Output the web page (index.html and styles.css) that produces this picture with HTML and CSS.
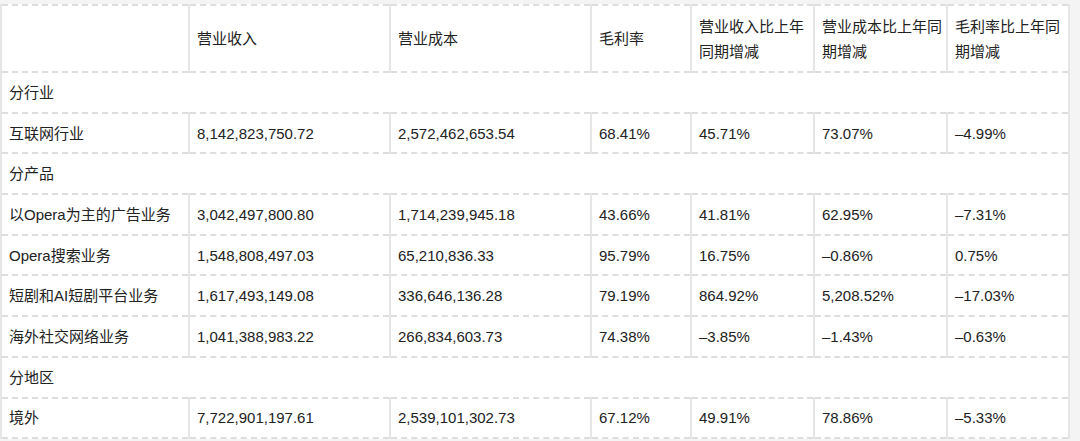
FILE: index.html
```html
<!DOCTYPE html>
<html lang="zh-CN">
<head>
<meta charset="utf-8">
<title>营业收入</title>
<link rel="stylesheet" href="styles.css">
</head>
<body>
<table class="fin">
  <colgroup>
    <col class="c1"><col class="c2"><col class="c3"><col class="c4"><col class="c5"><col class="c6"><col class="c7">
  </colgroup>
  <thead>
    <tr class="head">
      <th></th>
      <th>营业收入</th>
      <th>营业成本</th>
      <th>毛利率</th>
      <th>营业收入比上年同期增减</th>
      <th>营业成本比上年同期增减</th>
      <th>毛利率比上年同期增减</th>
    </tr>
  </thead>
  <tbody>
    <tr class="group"><td colspan="7">分行业</td></tr>
    <tr><td>互联网行业</td><td>8,142,823,750.72</td><td>2,572,462,653.54</td><td>68.41%</td><td>45.71%</td><td>73.07%</td><td>–4.99%</td></tr>
    <tr class="group"><td colspan="7">分产品</td></tr>
    <tr><td>以Opera为主的广告业务</td><td>3,042,497,800.80</td><td>1,714,239,945.18</td><td>43.66%</td><td>41.81%</td><td>62.95%</td><td>–7.31%</td></tr>
    <tr><td>Opera搜索业务</td><td>1,548,808,497.03</td><td>65,210,836.33</td><td>95.79%</td><td>16.75%</td><td>–0.86%</td><td>0.75%</td></tr>
    <tr><td>短剧和AI短剧平台业务</td><td>1,617,493,149.08</td><td>336,646,136.28</td><td>79.19%</td><td>864.92%</td><td>5,208.52%</td><td>–17.03%</td></tr>
    <tr><td>海外社交网络业务</td><td>1,041,388,983.22</td><td>266,834,603.73</td><td>74.38%</td><td>–3.85%</td><td>–1.43%</td><td>–0.63%</td></tr>
    <tr class="group"><td colspan="7">分地区</td></tr>
    <tr><td>境外</td><td>7,722,901,197.61</td><td>2,539,101,302.73</td><td>67.12%</td><td>49.91%</td><td>78.86%</td><td>–5.33%</td></tr>
  </tbody>
</table>
</body>
</html>
```
FILE: styles.css
```css
html, body {
  margin: 0;
  background: #f4f4f4;
}
body {
  padding: 4px 0 0 0;
  font-family: "Liberation Sans", "Noto Sans CJK SC", sans-serif;
  font-size: 15px;
  color: #222;
}
.fin {
  table-layout: fixed;
  width: 1068px;
  border-collapse: collapse;
  background: #fff;
}
.c1 { width: 188px; }
.c2 { width: 201px; }
.c3 { width: 201px; }
.c4 { width: 100px; }
.c5 { width: 123px; }
.c6 { width: 133px; }
.c7 { width: 122px; }
.fin th,
.fin td {
  text-align: left;
  font-weight: normal;
  vertical-align: middle;
  padding: 0 2px 0 7px;
  line-height: 25px;
  border-left: 2px solid #e6e6e6;
  border-right: 2px solid #e6e6e6;
  border-top: 2px dashed #dedede;
  border-bottom: 2px dashed #dedede;
}
.head {
  height: 67px;
}
.fin tbody tr {
  height: 40.7px;
}
```
